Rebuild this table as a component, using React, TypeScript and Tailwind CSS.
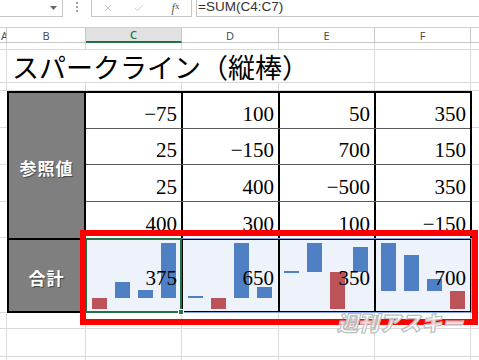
import { X, Check } from "lucide-react";

const colW = ["w-[7px]", "w-[79px]", "w-[96px]", "w-[97px]", "w-[96px]", "w-[96px]", "w-[8px]"];

const rows = [
  ["−75", "100", "50", "350"],
  ["25", "−150", "700", "150"],
  ["25", "400", "−500", "350"],
  ["400", "300", "100", "−150"],
];

const rowH = ["h-[36px] border-b", "h-[36px] border-b", "h-[37px] border-b", "h-[36px]"];
const cellW = ["w-[97px] border-r-2", "w-[97px] border-r-2", "w-[96px] border-r-2", "w-[94px]"];

// [top, height, negative] measured from the cell's content top
const sparks = [
  { total: "375", x0: 6, bars: [[58, 11, 1], [42, 16, 0], [50, 8, 0], [3, 55, 0]] },
  { total: "650", x0: 5, bars: [[56, 2, 0], [58, 11, 1], [3, 55, 0], [47, 11, 0]] },
  { total: "350", x0: 4, bars: [[31, 2, 0], [3, 29, 0], [32, 37, 1], [7, 25, 0]] },
  { total: "700", x0: 5, bars: [[3, 48, 0], [15, 36, 0], [39, 12, 0], [51, 18, 1]] },
];

const stripRows = ["h-[37px]", "h-[37px]", "h-[37px]", "h-[36px]", "h-[75px]"];

function SheetRow({ h }: { h: string }) {
  return (
    <div className={`flex ${h} border-b border-[#dadada]`}>
      {colW.map((w, i) => (
        <div key={i} className={`${w} shrink-0 ${i < colW.length - 1 ? "border-r border-[#dadada]" : ""}`} />
      ))}
    </div>
  );
}

function Strip() {
  return (
    <div className="w-[7px] shrink-0 flex flex-col">
      {stripRows.map((h, i) => (
        <div key={i} className={`${h} border-b border-[#dadada]`} />
      ))}
    </div>
  );
}

export default function App() {
  return (
    <div className="relative w-[479px] h-[360px] overflow-hidden bg-white font-['Liberation_Sans',sans-serif]">
      {/* formula bar */}
      <div className="flex h-[17px]">
        <div className="w-[63px] border-r border-b border-[#c6c6c6] flex items-center justify-end pr-[5px]">
          <svg width="7" height="4" viewBox="0 0 7 4">
            <path d="M0 0h7L3.5 4z" fill="#666" />
          </svg>
        </div>
        <div className="w-[28px] flex justify-center pt-[2px]">
          <div className="flex flex-col gap-[2px]">
            <div className="w-[2px] h-[2px] bg-[#a0a0a0]" />
            <div className="w-[2px] h-[2px] bg-[#a0a0a0]" />
            <div className="w-[2px] h-[2px] bg-[#a0a0a0]" />
          </div>
        </div>
        <div className="w-[101px] border-l border-r border-b border-[#c6c6c6] flex items-center">
          <div className="w-[32px] flex justify-center">
            <X size={12} strokeWidth={1.3} color="#b4b4b4" />
          </div>
          <div className="w-[30px] flex justify-center">
            <Check size={12} strokeWidth={1.3} color="#b4b4b4" />
          </div>
          <div className="flex-1 flex justify-center pl-[6px] font-['Liberation_Serif',serif] italic text-[12px] text-[#555] leading-none">
            f<span className="text-[9px] not-italic">x</span>
          </div>
        </div>
        <div className="w-[4px]" />
        <div className="flex-1 border-l border-b border-[#c6c6c6] pl-[1px] text-[13.5px] leading-[14px] text-[#333]">
          =SUM(C4:C7)
        </div>
      </div>
      <div className="h-[10px]" />

      {/* column headers */}
      <div className="flex h-[16px] border-t border-[#d0d0d0] text-[11px] text-[#444] font-['Open_Sans',sans-serif] leading-none">
        <div className="w-[7px] border-r border-b border-[#c6c6c6] flex items-center justify-end overflow-hidden">
          <span className="mr-[-2px]">A</span>
        </div>
        <div className="w-[79px] border-r border-b border-[#c6c6c6] flex items-center justify-center">B</div>
        <div className="w-[96px] border-r border-[#c6c6c6] border-b-2 border-b-[#217346] bg-[#e1e1e1] flex items-center justify-center text-[#217346] font-semibold">
          C
        </div>
        <div className="w-[97px] border-r border-b border-[#c6c6c6] flex items-center justify-center">D</div>
        <div className="w-[96px] border-r border-b border-[#c6c6c6] flex items-center justify-center">E</div>
        <div className="w-[96px] border-r border-b border-[#c6c6c6] flex items-center justify-center">F</div>
        <div className="w-[8px] border-b border-[#c6c6c6]" />
      </div>

      <SheetRow h="h-[7px]" />

      {/* title row */}
      <div className="flex h-[33px] border-b border-[#dadada]">
        <div className="w-[7px] border-r border-[#dadada]" />
        <div className="w-[368px] border-r border-[#dadada] flex items-center pl-[5px] font-['Noto_Sans_CJK_JP',sans-serif] text-[27px] leading-none text-black whitespace-nowrap">
          スパークライン（縦棒）
        </div>
        <div className="w-[96px] border-r border-[#dadada]" />
        <div className="w-[8px]" />
      </div>

      <SheetRow h="h-[8px]" />

      {/* table */}
      <div className="flex h-[222px]">
        <Strip />
        <div className="w-[465px] border-2 border-black flex flex-col font-['Liberation_Serif',serif] text-[21px] leading-none text-black">
          <div className="flex h-[145px]">
            <div className="w-[77px] border-r-2 border-black bg-[#7f7f7f] flex items-center justify-center pt-[3px] text-white font-['Noto_Sans_CJK_JP',sans-serif] font-bold text-[17px] tracking-[1px] [text-shadow:1px_1px_1px_rgba(0,0,0,0.45)]">
              参照値
            </div>
            <div className="flex flex-col">
              {rows.map((r, ri) => (
                <div key={ri} className={`flex ${rowH[ri]} border-[#5a5a5a]`}>
                  {r.map((v, ci) => (
                    <div key={ci} className={`${cellW[ci]} border-black flex items-end justify-end pr-[4px] pb-[3px]`}>
                      {v}
                    </div>
                  ))}
                </div>
              ))}
            </div>
          </div>
          <div className="flex h-[73px] border-t-2 border-black">
            <div className="w-[77px] border-r-2 border-black bg-[#7f7f7f] flex items-center justify-center pt-[3px] text-white font-['Noto_Sans_CJK_JP',sans-serif] font-bold text-[17px] tracking-[1px] [text-shadow:1px_1px_1px_rgba(0,0,0,0.45)]">
              合計
            </div>
            {sparks.map((s, ci) => (
              <div key={ci} className={`relative ${cellW[ci]} border-black bg-[#eef2fb] flex items-start justify-end pr-[4px] pt-[28px]`}>
                <svg className="absolute left-0 top-0" width="95" height="71">
                  {s.bars.map(([t, h, neg], bi) => (
                    <rect
                      key={bi}
                      x={s.x0 + bi * 23}
                      y={t}
                      width={15}
                      height={h}
                      fill={neg ? "#bb5359" : "#4f80c4"}
                    />
                  ))}
                </svg>
                <span className="relative">{s.total}</span>
              </div>
            ))}
          </div>
        </div>
        <Strip />
      </div>

      <SheetRow h="h-[16px]" />
      <SheetRow h="h-[28px]" />
      <SheetRow h="h-[10px]" />

      {/* selection and active cell */}
      <div className="absolute left-[86px] top-[238px] w-[386px] h-[75px] border border-[#86a5e0]" />
      <div className="absolute left-[85px] top-[238px] w-[97px] h-[75px] border-2 border-[#217346]" />
      <div className="absolute left-[178px] top-[309px] w-[6px] h-[6px] bg-[#217346] border border-white" />

      {/* highlight frame */}
      <div className="absolute left-[80px] top-[230px] w-[398px] h-[95px] border-[6px] border-[#ff0000]" />

      {/* watermark */}
      <div className="absolute left-[337px] top-[312px] font-['Noto_Sans_CJK_JP',sans-serif] font-black italic text-[21px] leading-none text-[rgba(255,255,255,0.85)] [-webkit-text-stroke:1.2px_#bdbdbd]">
        週刊アスキー
      </div>
    </div>
  );
}
